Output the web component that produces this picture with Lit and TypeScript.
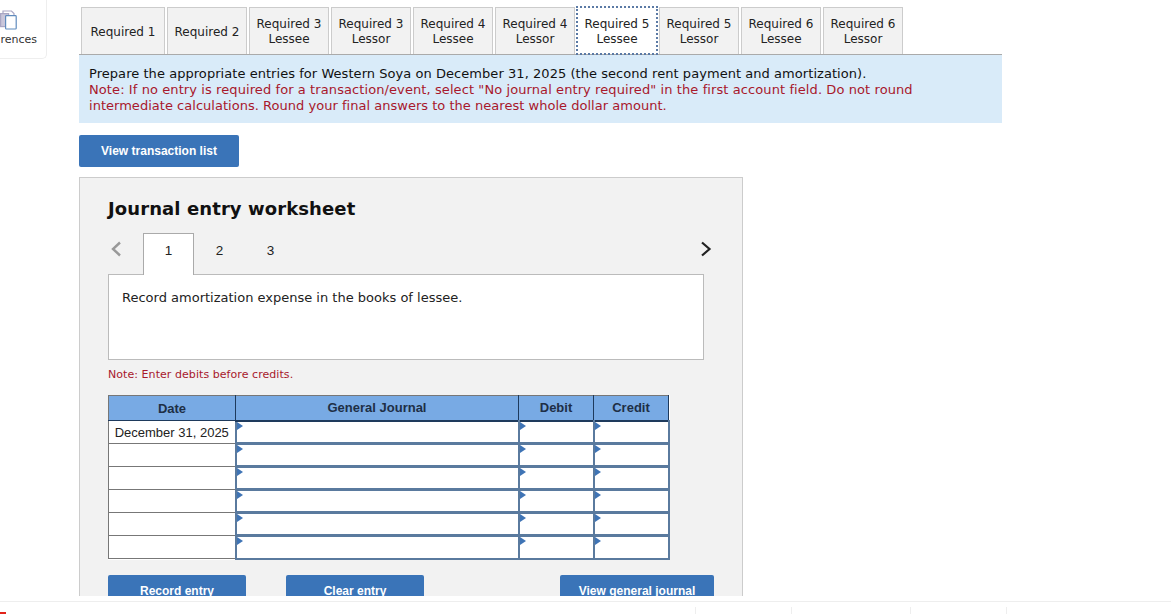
import { LitElement, html, css } from "lit";
import { customElement } from "lit/decorators.js";

const TABS = [
  ["Required 1"], ["Required 2"], ["Required 3", "Lessee"], ["Required 3", "Lessor"],
  ["Required 4", "Lessee"], ["Required 4", "Lessor"], ["Required 5", "Lessee"],
  ["Required 5", "Lessor"], ["Required 6", "Lessee"], ["Required 6", "Lessor"],
];

@customElement("app-root")
export class AppRoot extends LitElement {
  static styles = css`
    :host { display: block; width: 1171px; height: 614px; overflow: hidden; background: #fff; font-family: "DejaVu Sans", Verdana, sans-serif; color: #111; }
    .top { height: 596px; display: flex; overflow: hidden; }
    .side { width: 47px; height: 59px; flex: none; box-sizing: border-box; border: 1px solid #eee; border-left: 0; border-top: 0; border-radius: 0 0 5px 0; overflow: hidden; display: flex; flex-direction: column; align-items: flex-end; padding: 10px 9px 0 0; }
    .side svg { display: block; align-self: flex-start; }
    .side span { font: 11px "DejaVu Sans", sans-serif; color: #333; white-space: nowrap; margin-top: 3px; }
    .main { width: 923px; margin-left: 32px; flex: none; padding-top: 7px; }
    .tabs { display: flex; gap: 2px; padding-left: 2px; height: 47px; border-bottom: 1px solid #aaa; }
    .tab { width: 80px; box-sizing: border-box; height: 47px; padding-top: 1px; border: 1px solid #ccc; border-bottom: 0; background: #f2f2f2; font-size: 12px; line-height: 15px; text-align: center; display: flex; flex-direction: column; justify-content: center; color: #222; }
    .tab.wide { width: 84px; }
    .tab.single { padding-top: 2px; }
    .tab.active { background: #fff; outline: 2px dotted #5b7aa5; outline-offset: -1px; border: 0; padding-top: 2px; }
    .info { background: #d9ebf9; height: 68px; box-sizing: border-box; padding: 11px 10px 0; font-size: 13px; line-height: 16px; white-space: nowrap; }
    .l1 { letter-spacing: 0.05px; }
    .l2 { letter-spacing: 0.09px; }
    .l3 { letter-spacing: 0.023px; }
    .red { color: #a8182c; }
    .btn { background: #3a74b8; color: #fff; font: bold 12px "Liberation Sans", Arial, sans-serif; border-radius: 2px; display: flex; align-items: center; justify-content: center; box-sizing: border-box; height: 32px; }
    .view { width: 160px; margin-top: 12px; }
    .sheet { width: 664px; box-sizing: border-box; margin-top: 10px; height: 440px; background: #f2f2f2; border: 1px solid #ccc; padding: 19px 28px 0; }
    h2 { margin: 0; font-size: 18px; line-height: 24px; font-weight: bold; color: #111; letter-spacing: 0.1px; }
    .steps { display: flex; align-items: stretch; height: 41px; margin-top: 12px; position: relative; z-index: 1; }
    .prev { width: 35px; display: flex; align-items: center; padding-left: 2px; box-sizing: border-box; padding-bottom: 10px; }
    .step { width: 51px; font: 13.5px "Liberation Sans", Arial, sans-serif; text-align: center; line-height: 36px; box-sizing: border-box; color: #222; }
    .step.on { background: #fff; border: 1px solid #aaa; border-bottom: 0; height: 42px; line-height: 34px; }
    .next { margin-left: auto; margin-right: 2px; display: flex; padding-bottom: 10px; align-items: center; }
    .desc { width: 596px; height: 86px; box-sizing: border-box; background: #fff; border: 1px solid #bbb; padding: 15px 13px; font-size: 13px; line-height: 16px; color: #222; }
    .note { font-size: 11px; line-height: 14px; margin-top: 8px; letter-spacing: 0.06px; }
    table { border-collapse: collapse; table-layout: fixed; width: 560px; margin-top: 13px; font: 13px "Liberation Sans", Arial, sans-serif; background: #fff; }
    th { background: #78aae4; height: 25px; box-sizing: border-box; padding: 0; border: 1px solid #1e3a5c; border-top-color: #777; border-left-color: #777; font-weight: bold; font-size: 13px; color: #1e2f46; }
    td { padding: 0; height: 23px; box-sizing: border-box; }
    td.d { border: 1px solid #777; text-align: center; font-size: 13px; color: #222; }
    td.i { border: 2px solid #5a7a9e; position: relative; }
    tr.first td.i { border-top-color: #1e3a5c; }
    tr.mid td.i { border-bottom-width: 3px; }
    td.i::before { content: ""; position: absolute; left: 0; top: 0; border-left: 6px solid #3f74b5; border-top: 4px solid transparent; border-bottom: 4px solid transparent; }
    .actions { display: flex; margin-top: 15px; width: 606px; }
    .actions .btn { width: 138px; margin-right: 40px; align-items: flex-start; padding-top: 9px; height: 40px; }
    .actions .btn.v { width: 154px; margin: 0 0 0 auto; }
    .foot { margin-top: 5px; border-top: 1px solid #eee; height: 12px; position: relative; display: flex; align-items: flex-end; }
    .mark { position: absolute; left: 0; bottom: 0; width: 6px; height: 2px; background: #e2231a; }
    .seg { height: 7px; border-left: 1px solid #eee; box-sizing: border-box; }
    .s0 { width: 695px; border-left: 0; }
    .s1 { width: 96px; }
    .s2 { width: 119px; }
    .s3 { width: 96px; }
    .s4 { flex: 1; }
  `;

  render() {
    const rows = [0, 1, 2, 3, 4, 5];
    return html`
      <div class="top">
        <div class="side">
          <svg width="18" height="20" viewBox="0 0 18 20" fill="none">
            <path d="M3 3V1H11.5L14 3.5V5" stroke="#a9a6c4" stroke-width="1.2"/>
            <rect x="0.6" y="3.6" width="8" height="13" fill="#c9c6da" stroke="#a9a6c4" stroke-width="1.2"/>
            <rect x="5.6" y="5.6" width="10.6" height="13.4" rx="0.8" fill="#fff" stroke="#5f8bbd" stroke-width="1.2"/>
          </svg>
          <span>rences</span>
        </div>
        <div class="main">
          <div class="tabs">
            ${TABS.map((t, i) => html`<div class="tab ${i === 0 ? "wide" : ""} ${t.length === 1 ? "single" : ""} ${i === 6 ? "active" : ""}">${t.map((l) => html`<div>${l}</div>`)}</div>`)}
          </div>
          <div class="info">
            <div class="l1">Prepare the appropriate entries for Western Soya on December 31, 2025 (the second rent payment and amortization).</div>
            <div class="red l2">Note: If no entry is required for a transaction/event, select "No journal entry required" in the first account field. Do not round</div>
            <div class="red l3">intermediate calculations. Round your final answers to the nearest whole dollar amount.</div>
          </div>
          <div class="btn view">View transaction list</div>
          <div class="sheet">
            <h2>Journal entry worksheet</h2>
            <div class="steps">
              <div class="prev"><svg width="12" height="16" viewBox="0 0 12 16" fill="none" stroke="#999" stroke-width="2.4"><path d="M10 1.5L3 8l7 6.5"/></svg></div>
              <div class="step on">1</div><div class="step">2</div><div class="step">3</div>
              <div class="next"><svg width="12" height="16" viewBox="0 0 12 16" fill="none" stroke="#222" stroke-width="2.2"><path d="M2 1.5L9.5 8 2 14.5"/></svg></div>
            </div>
            <div class="desc">Record amortization expense in the books of lessee.</div>
            <div class="note red">Note: Enter debits before credits.</div>
            <table>
              <colgroup><col style="width:127px"/><col style="width:283px"/><col style="width:75px"/><col style="width:75px"/></colgroup>
              <tr><th>Date</th><th>General Journal</th><th>Debit</th><th>Credit</th></tr>
              ${rows.map((r) => html`<tr class="${r === 0 ? "first" : ""} ${r < 5 ? "mid" : ""}"><td class="d">${r === 0 ? "December 31, 2025" : ""}</td><td class="i"></td><td class="i"></td><td class="i"></td></tr>`)}
            </table>
            <div class="actions">
              <div class="btn">Record entry</div>
              <div class="btn">Clear entry</div>
              <div class="btn v">View general journal</div>
            </div>
          </div>
        </div>
      </div>
      <div class="foot"><div class="mark"></div><div class="seg s0"></div><div class="seg s1"></div><div class="seg s2"></div><div class="seg s3"></div><div class="seg s4"></div></div>
    `;
  }
}
